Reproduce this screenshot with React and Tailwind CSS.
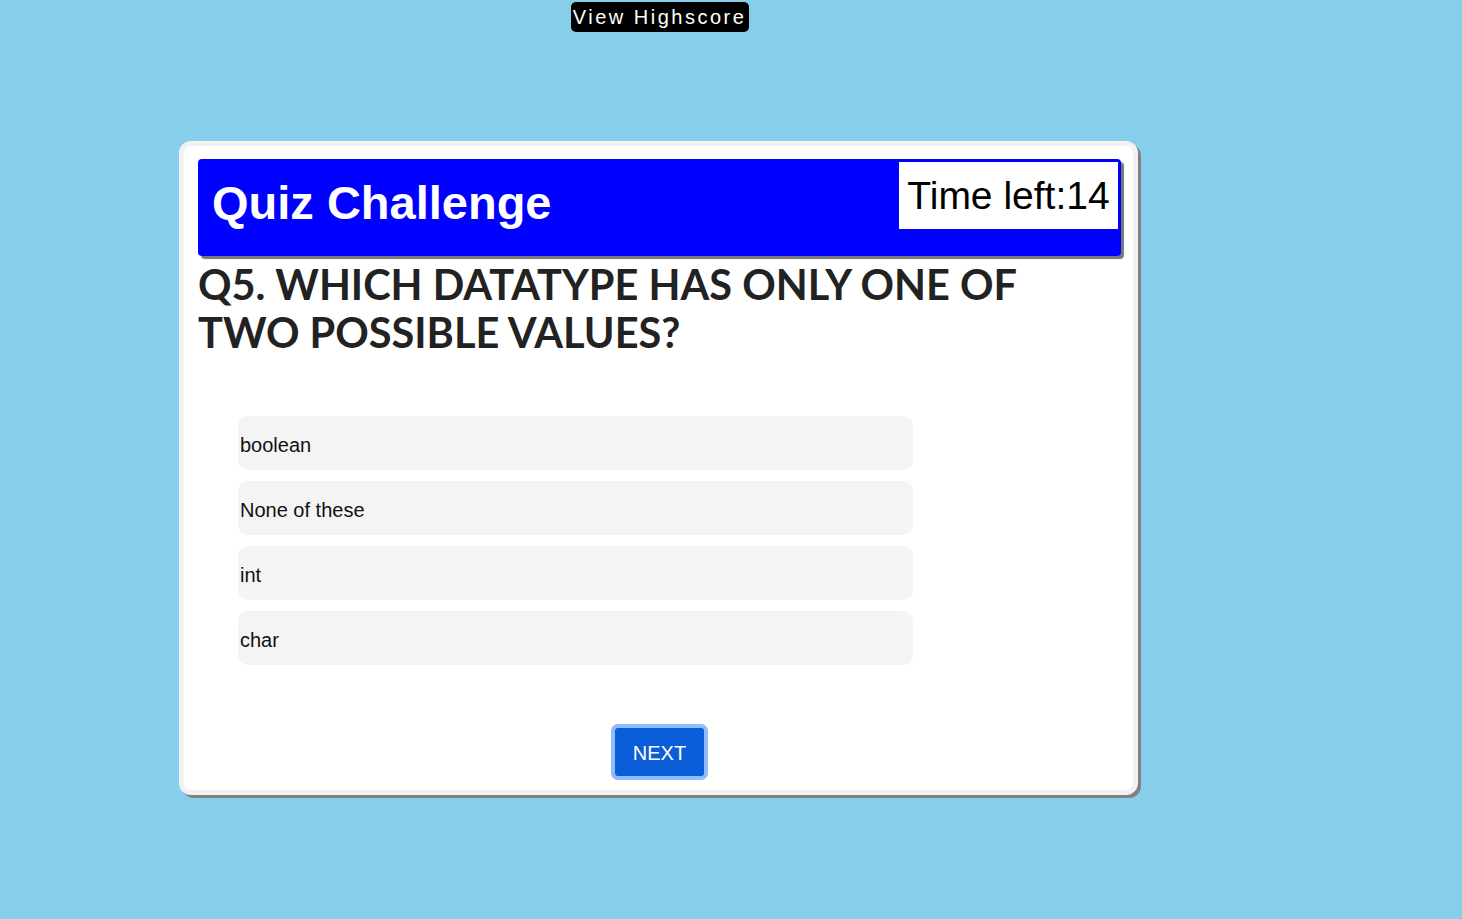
import React, { useState } from "react";

const QUESTION = "Q5. Which datatype has only one of two possible values?";
const OPTIONS = ["boolean", "None of these", "int", "char"];

const App = () => {
  const [timeLeft] = useState(14);

  return (
    <div className="min-h-screen bg-[#87ceeb] font-['Liberation_Sans',sans-serif]">
      <div className="ml-[179px] w-[961px] pt-[2px]">
        {/* Highscore link */}
        <div className="flex justify-center">
          <button className="bg-black text-white rounded-[5px] h-[30px] w-[178px] text-[20px] tracking-[2.5px] leading-none">
            View Highscore
          </button>
        </div>

        {/* Quiz card */}
        <div className="mt-[109px] w-[959px] bg-white border-[5px] border-[#f2f2f2] rounded-[12px] shadow-[3px_3px_0_#808080] pl-[14px] pr-[12px] pt-[13px] pb-[10px]">
          <header className="h-[97px] bg-[#0000ff] rounded-[4px] shadow-[3px_3px_1px_#777] flex items-start justify-between pl-[14px] pr-[3px] pt-[3px]">
            <h1 className="text-white font-bold text-[47px] leading-none mt-[17px]">
              Quiz Challenge
            </h1>
            <div className="bg-white w-[219px] h-[67px] flex items-center justify-center text-black text-[39px] leading-none">
              Time left:{timeLeft}
            </div>
          </header>

          <h2 className="mt-[4px] max-w-[870px] uppercase font-['Lato',sans-serif] font-bold text-[41.5px] leading-[48px] text-[#222]">
            {QUESTION}
          </h2>

          <ul className="mt-[60px] pl-[40px] flex flex-col gap-[11px]">
            {OPTIONS.map((opt) => (
              <li
                key={opt}
                className="w-[675px] h-[54px] bg-[#f4f4f4] rounded-[10px] flex items-center pl-[2px] pt-[4px] text-[20px] text-[#111]"
              >
                {opt}
              </li>
            ))}
          </ul>

          <div className="flex justify-center mt-[59px]">
            <button className="h-[56px] w-[97px] rounded-[7px] border-[4px] border-[#90bdf8] bg-[#0b5ed7] text-white text-[20px] pt-[2px]">
              NEXT
            </button>
          </div>
        </div>
      </div>
    </div>
  );
};

export default App;
